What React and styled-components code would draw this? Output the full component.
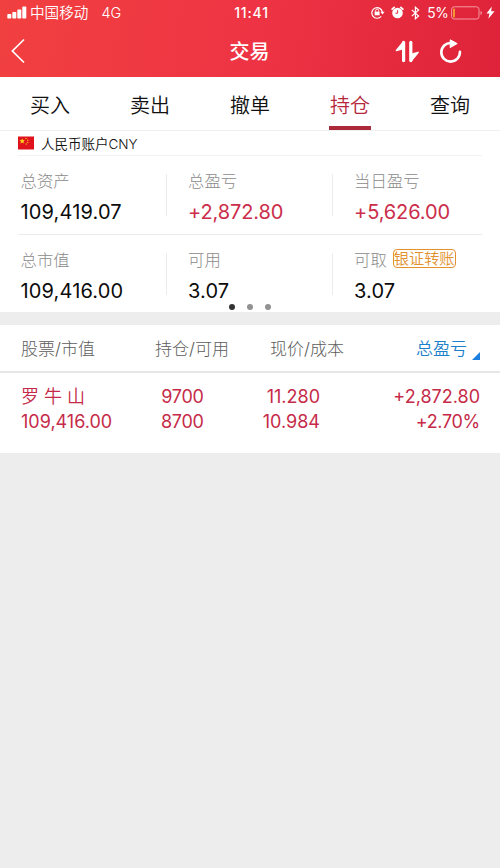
import React from 'react'
import styled, { createGlobalStyle } from 'styled-components'

const tabs = ['买入', '卖出', '撤单', '持仓', '查询']

const summary = [
    [
        { label: '总资产', value: '109,419.07' },
        { label: '总盈亏', value: '+2,872.80', up: true },
        { label: '当日盈亏', value: '+5,626.00', up: true },
    ],
    [
        { label: '总市值', value: '109,416.00' },
        { label: '可用', value: '3.07' },
        { label: '可取', value: '3.07', action: '银证转账' },
    ],
]

const holdings = [
    { name: '罗 牛 山', worth: '109,416.00', total: '9700', usable: '8700', price: '11.280', cost: '10.984', profit: '+2,872.80', rate: '+2.70%' },
]

const SignalIcon = () => (
    <svg width="20" height="13" viewBox="0 0 20 13" fill="#fff">
        <rect x="0.3" y="8" width="4" height="4.6" rx="0.8" />
        <rect x="5.3" y="6" width="4" height="6.6" rx="0.8" />
        <rect x="10.3" y="3.6" width="4" height="9" rx="0.8" />
        <rect x="15.3" y="0.6" width="4" height="12" rx="0.8" />
    </svg>
)

const LockIcon = () => (
    <svg width="14" height="13" viewBox="0 0 14 13" fill="none" stroke="#fff" strokeWidth="1.2">
        <path d="M10.2 10.4A5.3 5.3 0 1 1 11.4 6.2" />
        <path d="M9.4 5.8h4.2l-2.1 2.8z" fill="#fff" stroke="none" />
        <rect x="3.6" y="5.6" width="5" height="3.7" fill="#fff" stroke="none" />
        <path d="M4.6 5.8V4.6a1.5 1.5 0 0 1 3 0v1.2" strokeWidth="0.9" />
    </svg>
)

const AlarmIcon = () => (
    <svg width="13" height="13" viewBox="0 0 13 13">
        <circle cx="6.5" cy="7" r="5.3" fill="#fff" />
        <path d="M1.2 3.2L3.2 1.4M11.8 3.2L9.8 1.4" stroke="#fff" strokeWidth="1.8" strokeLinecap="round" />
        <path d="M6.6 4.2v3H4.4" fill="none" stroke="#e5283f" strokeWidth="1" />
    </svg>
)

const BluetoothIcon = () => (
    <svg width="9" height="14" viewBox="0 0 9 14" fill="none" stroke="#fff" strokeWidth="1.2">
        <path d="M0.8 3.9L7.6 10 4.4 12.8V1.2L7.6 4 0.8 10.1" />
    </svg>
)

const BatteryIcon = () => (
    <svg width="32" height="14" viewBox="0 0 32 14">
        <rect x="0.6" y="0.8" width="27.4" height="12.2" rx="2.6" fill="none" stroke="#f799a2" />
        <rect x="2.2" y="2.4" width="1.6" height="9" rx="0.6" fill="#f8b52c" />
        <path d="M29.5 5v4q1.5-0.6 1.5-2t-1.5-2z" fill="#f799a2" />
    </svg>
)

const BoltIcon = () => (
    <svg width="9" height="13" viewBox="0 0 8 12" fill="#fff">
        <path d="M5.2 0.4L0.3 6.9h2.8L2 11.8 7.8 4.9H4.6z" />
    </svg>
)

const BackIcon = () => (
    <svg width="14" height="26" viewBox="0 0 14 26" fill="none" stroke="#fff" strokeWidth="1.7">
        <path d="M13 1.5L1.4 13 13 24.5" />
    </svg>
)

const TransferIcon = () => (
    <svg width="26" height="24" viewBox="0 0 26 24" fill="none" stroke="#fff" strokeLinecap="round" strokeLinejoin="round">
        <path d="M9.6 21.6V3.4" strokeWidth="3.2" />
        <path d="M9.4 3L2.4 11.4l7-2z" fill="#fff" strokeWidth="1.6" />
        <path d="M16.8 3.4v18.2" strokeWidth="3.2" />
        <path d="M17 22l7-8.6-7 2.2z" fill="#fff" strokeWidth="1.6" />
    </svg>
)

const RefreshIcon = () => (
    <svg width="24" height="26" viewBox="0 0 24 26" fill="none" stroke="#fff">
        <path d="M13 5A9.3 9.3 0 1 0 21.9 13.9" strokeWidth="2.6" strokeLinecap="round" />
        <path d="M12.2 1.8l7 3.8-7 4z" fill="#fff" strokeWidth="1" strokeLinejoin="round" />
    </svg>
)

const FlagIcon = () => (
    <svg width="16" height="14" viewBox="0 0 16 14">
        <rect y="0.5" width="16" height="13" fill="#e0121c" />
        <path d="M4.2 2.4l0.8 1.7 1.8 0.2-1.3 1.3 0.4 1.9-1.7-0.9-1.7 0.9 0.4-1.9-1.3-1.3 1.8-0.2z" fill="#ffd21f" />
        <circle cx="8" cy="2.4" r="0.7" fill="#ffc21f" />
        <circle cx="9.8" cy="4.2" r="0.7" fill="#ffc21f" />
        <circle cx="9.8" cy="6.4" r="0.7" fill="#ffc21f" />
        <circle cx="8.2" cy="8" r="0.7" fill="#ffc21f" />
    </svg>
)

const SortIcon = () => (
    <svg width="8" height="8" viewBox="0 0 8 8">
        <path d="M8 0v8H0z" fill="#1b7fe0" />
    </svg>
)

function App() {
    return (
        <Page>
            <GlobalStyle />
            <Header>
                <StatusBar>
                    <StatusSide>
                        <SignalIcon />
                        <Carrier>中国移动</Carrier>
                        <Network>4G</Network>
                    </StatusSide>
                    <Clock>11:41</Clock>
                    <StatusSide $end>
                        <LockIcon />
                        <AlarmIcon />
                        <BluetoothIcon />
                        <Percent>5%</Percent>
                        <Power>
                            <BatteryIcon />
                            <BoltIcon />
                        </Power>
                    </StatusSide>
                </StatusBar>
                <NavBar>
                    <NavSide><BackIcon /></NavSide>
                    <Title>交易</Title>
                    <NavSide $end>
                        <TransferIcon />
                        <RefreshIcon />
                    </NavSide>
                </NavBar>
            </Header>

            <Tabs>
                {tabs.map((tab) => (
                    <Tab key={tab} $active={tab === '持仓'}><TabText>{tab}</TabText></Tab>
                ))}
            </Tabs>

            <Account>
                <AccountTitle>
                    <FlagIcon />
                    <span>人民币账户CNY</span>
                </AccountTitle>
                {summary.map((row, index) => (
                    <SummaryRow key={index}>
                        {row.map((item) => (
                            <SummaryCell key={item.label}>
                                <Label>
                                    {item.label}
                                    {item.action && <TransferButton>{item.action}</TransferButton>}
                                </Label>
                                <Value $up={item.up}>{item.value}</Value>
                            </SummaryCell>
                        ))}
                    </SummaryRow>
                ))}
                <Dots>
                    <Dot $active />
                    <Dot />
                    <Dot />
                </Dots>
            </Account>

            <TableHead>
                <Column>股票/市值</Column>
                <Column $align='right'>持仓/可用</Column>
                <Column $align='right'>现价/成本</Column>
                <SortColumn>总盈亏<SortIcon /></SortColumn>
            </TableHead>
            {holdings.map((stock) => (
                <Holding key={stock.name}>
                    <Column><StockName>{stock.name}</StockName><Figure>{stock.worth}</Figure></Column>
                    <Column $align='right' $inset='25.5px'><Figure $tight>{stock.total}</Figure><Figure $tight>{stock.usable}</Figure></Column>
                    <Column $align='right' $inset='24px'><Figure>{stock.price}</Figure><Figure>{stock.cost}</Figure></Column>
                    <Column $align='right'><Figure>{stock.profit}</Figure><Figure $tight>{stock.rate}</Figure></Column>
                </Holding>
            ))}
        </Page>
    )
}

export default App

const GlobalStyle = createGlobalStyle`
* {
    box-sizing: border-box;
}
body {
    margin: 0;
    background: #ededed;
}
svg {
    display: block;
    flex: none;
}
`

const Page = styled.main`
width: 500px;
min-height: 868px;
background: #ededed;
color: #111;
font-family: Inter, 'Noto Sans CJK SC', sans-serif;
white-space: nowrap;
`

const Header = styled.header`
height: 77px;
color: #fff;
background: linear-gradient(98deg, #f14040 0%, #ee3444 50%, #de2239 100%);
`

const StatusBar = styled.div`
display: grid;
grid-template-columns: 1fr auto 1fr;
align-items: center;
height: 25px;
padding: 0 5px 0 7px;
`

const StatusSide = styled.div`
display: flex;
align-items: center;
justify-content: ${({ $end }) => ($end ? 'flex-end' : 'flex-start')};
gap: ${({ $end }) => ($end ? '6.5px' : '3px')};
`

const Carrier = styled.span`
font-size: 14.6px;
font-weight: 350;
line-height: 24px;
`

const Network = styled.span`
margin-left: 10px;
font-size: 14.4px;
font-weight: 350;
`

const Clock = styled.span`
margin-left: 1px;
font-size: 14px;
font-weight: 500;
letter-spacing: 0.8px;
`

const Percent = styled.span`
margin: 0 -4px 0 1px;
font-size: 13.8px;
font-weight: 400;
letter-spacing: -0.3px;
`

const Power = styled.div`
display: flex;
align-items: center;
gap: 3px;
`

const NavBar = styled.div`
display: grid;
grid-template-columns: 1fr auto 1fr;
align-items: center;
height: 52px;
padding: 0 38px 0 11px;
`

const NavSide = styled.div`
display: flex;
align-items: center;
justify-content: ${({ $end }) => ($end ? 'flex-end' : 'flex-start')};
gap: 18px;
`

const Title = styled.h1`
margin: 1px 0 0 26px;
font-size: 20px;
font-weight: 500;
line-height: 30px;
`

const Tabs = styled.nav`
display: grid;
grid-template-columns: repeat(5, 1fr);
height: 54px;
background: #fff;
border-bottom: 1px solid #efefef;
`

const Tab = styled.div`
display: flex;
justify-content: center;
width: 42px;
height: 53px;
margin: 0 auto;
padding-top: 15px;
color: ${({ $active }) => ($active ? '#b5283b' : '#111')};
border-bottom: 4px solid ${({ $active }) => ($active ? '#aa2a3a' : 'transparent')};
`

const TabText = styled.span`
font-size: 20px;
font-weight: 350;
line-height: 28px;
`

const Account = styled.section`
height: 181px;
padding: 0 18px;
background: #fff;
`

const AccountTitle = styled.div`
display: flex;
align-items: center;
gap: 7px;
height: 25px;
font-size: 13.5px;
font-weight: 350;
border-bottom: 1px solid #f2f2f2;
`

const SummaryRow = styled.div`
display: grid;
grid-template-columns: 148px 166px 1fr;
height: 78px;

& + & {
    border-top: 1px solid #ececec;
}
`

const SummaryCell = styled.div`
padding: 12px 0 0 2.5px;

& + & {
    height: 42px;
    margin-top: 18px;
    padding: 0 0 0 21px;
    border-left: 1px solid #ececec;
}
& + & > :first-child {
    margin-top: -6px;
}
`

const Label = styled.div`
display: flex;
align-items: center;
gap: 6px;
height: 23px;
color: #8a8a8a;
font-size: 16.4px;
font-weight: 300;
`

const TransferButton = styled.span`
height: 19px;
color: #e3912f;
font-size: 15.2px;
font-weight: 350;
line-height: 17px;
border: 1px solid #e3912f;
border-radius: 4px;
`

const Value = styled.div`
margin-top: 6px;
color: ${({ $up }) => ($up ? '#cb2d4b' : '#0c0c0c')};
font-size: 20px;
letter-spacing: ${({ $up }) => ($up ? '-0.1px' : '0.15px')};
line-height: 30px;
`

const Dots = styled.div`
display: flex;
justify-content: center;
gap: 12px;
margin-top: -8px;
`

const Dot = styled.i`
width: 6px;
height: 6px;
border-radius: 50%;
background: ${({ $active }) => ($active ? '#333' : '#929292')};
`

const TableRow = styled.div`
display: grid;
grid-template-columns: 92px 116px 115px 1fr;
padding: 0 20px 0 21px;
background: #fff;
`

const TableHead = styled(TableRow)`
align-items: center;
height: 48px;
padding-bottom: 2px;
margin-top: 13px;
color: #5c5c5c;
font-size: 17px;
font-weight: 300;
border-bottom: 2px solid #e6e6e6;
`

const Holding = styled(TableRow)`
height: 80px;
padding-top: 11px;
color: #c52b48;
font-size: 18px;
`

const Column = styled.div`
text-align: ${({ $align }) => $align || 'left'};
padding-right: ${({ $inset }) => $inset || 0};
`

const SortColumn = styled.div`
display: flex;
align-items: flex-end;
justify-content: flex-end;
gap: 5px;
color: #1b7fc9;
font-size: 17px;
font-weight: 350;
`

const Figure = styled.div`
line-height: 25px;
letter-spacing: ${({ $tight }) => ($tight ? '-0.3px' : 'normal')};
`

const StockName = styled(Figure)`
font-size: 18px;
font-weight: 350;
`
